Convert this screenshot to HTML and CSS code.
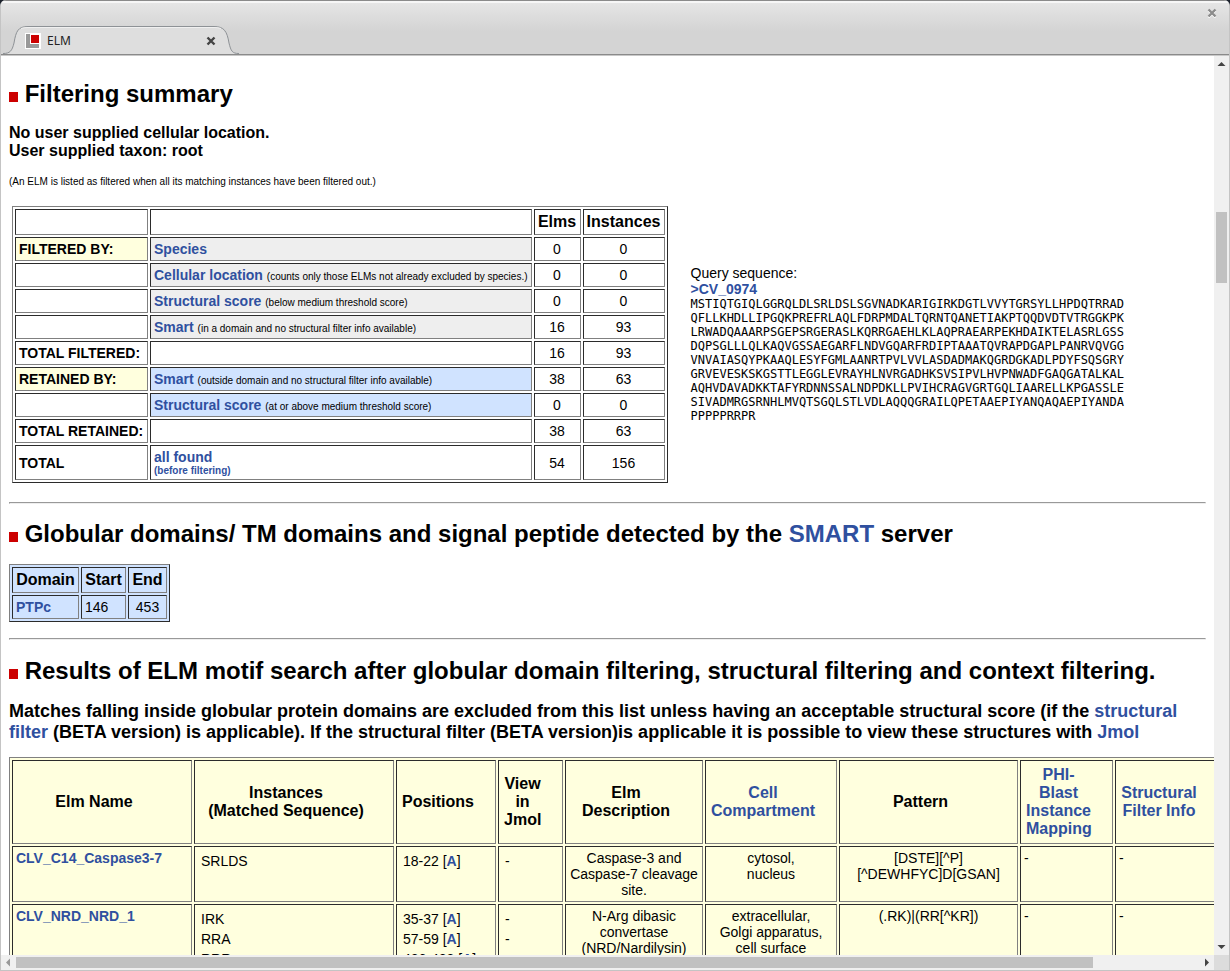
FILE: index.html
```html
<!DOCTYPE html>
<html lang="en">
<head>
<meta charset="utf-8">
<title>ELM</title>
<link rel="stylesheet" href="styles.css">
</head>
<body>
<div class="window">
  <header class="chrome">
    <button class="window-close" type="button" aria-label="Close window">
      <svg width="10" height="10" viewBox="0 0 10 10"><path d="M1.500 2.500L8.500 9.500M8.500 2.500L1.500 9.500" stroke="#fff" stroke-width="2.200"/><path d="M1.500 1.500L8.500 8.500M8.500 1.500L1.500 8.500" stroke="#8c8c8c" stroke-width="2.400"/></svg>
    </button>
    <div class="tab">
      <svg class="tab-shape" width="238" height="28" viewBox="0 0 238 28"><path d="M2 28C9 27.500 11 24 13 17C15 6 17 1.500 27 1.500H213C223 1.500 226 6 228 17C230 24 231 27.500 238 28Z" fill="#dedede"/><path d="M2 27.500C9 27.500 11 25 13 17C15 5 17 .5 27 .5H213C223 .5 226 5 228 17C230 25 231 27.500 238 27.500" fill="none" stroke="#8e9296"/><path d="M20 2.500Q23 1.500 27 1.500H213Q217 1.500 220 2.500" fill="none" stroke="#f0f0f0"/></svg>
      <svg class="favicon" width="16" height="16" viewBox="0 0 16 16"><path fill="#fff" d="M0 0h16v16H0z"/><path fill="#999" d="M1 1h4v10h9v4H1z"/><path fill="#c00" d="M6 2h8v8H6z"/></svg>
      <span class="tab-title">ELM</span>
      <button class="tab-close" type="button" aria-label="Close tab">
        <svg width="10" height="10" viewBox="0 0 10 10"><path d="M1.500 1.500L8.500 8.500M8.500 1.500L1.500 8.500" stroke="#444" stroke-width="2.400"/></svg>
      </button>
    </div>
  </header>
  <main class="page">
    <h2><span class="bullet"></span> Filtering summary</h2>
    <h3>No user supplied cellular location.<br>User supplied taxon: root</h3>
    <p class="note">(An ELM is listed as filtered when all its matching instances have been filtered out.)</p>
    <div class="summary">
      <table class="grid">
        <colgroup><col class="w-label"><col class="w-filter"><col class="w-elms"><col class="w-count"></colgroup>
        <thead><tr><th></th><th></th><th>Elms</th><th>Instances</th></tr></thead>
        <tbody>
          <tr><td class="label cream">FILTERED BY:</td><td class="gray"><a href="#">Species</a></td><td class="num">0</td><td class="num">0</td></tr>
          <tr><td></td><td class="gray"><a href="#">Cellular location</a> <small>(counts only those ELMs not already excluded by species.)</small></td><td class="num">0</td><td class="num">0</td></tr>
          <tr><td></td><td class="gray"><a href="#">Structural score</a> <small>(below medium threshold score)</small></td><td class="num">0</td><td class="num">0</td></tr>
          <tr><td></td><td class="gray"><a href="#">Smart</a> <small>(in a domain and no structural filter info available)</small></td><td class="num">16</td><td class="num">93</td></tr>
          <tr><td class="label">TOTAL FILTERED:</td><td></td><td class="num">16</td><td class="num">93</td></tr>
          <tr><td class="label cream">RETAINED BY:</td><td class="blue"><a href="#">Smart</a> <small>(outside domain and no structural filter info available)</small></td><td class="num">38</td><td class="num">63</td></tr>
          <tr><td></td><td class="blue"><a href="#">Structural score</a> <small>(at or above medium threshold score)</small></td><td class="num">0</td><td class="num">0</td></tr>
          <tr><td class="label">TOTAL RETAINED:</td><td></td><td class="num">38</td><td class="num">63</td></tr>
          <tr><td class="label">TOTAL</td><td><a class="stacked" href="#">all found <small>(before filtering)</small></a></td><td class="num">54</td><td class="num">156</td></tr>
        </tbody>
      </table>
      <div class="query">
        <div>Query sequence:</div>
        <a href="#">&gt;CV_0974</a>
<pre>MSTIQTGIQLGGRQLDLSRLDSLSGVNADKARIGIRKDGTLVVYTGRSYLLHPDQTRRAD
QFLLKHDLLIPGQKPREFRLAQLFDRPMDALTQRNTQANETIAKPTQQDVDTVTRGGKPK
LRWADQAAARPSGEPSRGERASLKQRRGAEHLKLAQPRAEARPEKHDAIKTELASRLGSS
DQPSGLLLQLKAQVGSSAEGARFLNDVGQARFRDIPTAAATQVRAPDGAPLPANRVQVGG
VNVAIASQYPKAAQLESYFGMLAANRTPVLVVLASDADMAKQGRDGKADLPDYFSQSGRY
GRVEVESKSKGSTTLEGGLEVRAYHLNVRGADHKSVSIPVLHVPNWADFGAQGATALKAL
AQHVDAVADKKTAFYRDNNSSALNDPDKLLPVIHCRAGVGRTGQLIAARELLKPGASSLE
SIVADMRGSRNHLMVQTSGQLSTLVDLAQQQGRAILQPETAAEPIYANQAQAEPIYANDA
PPPPPRRPR</pre>
      </div>
    </div>
    <hr>
    <h2><span class="bullet"></span> Globular domains/ TM domains and signal peptide detected by the <a href="#">SMART</a> server</h2>
    <table class="grid domains blue">
      <colgroup><col class="w-domain"><col class="w-start"><col class="w-end"></colgroup>
      <thead><tr><th>Domain</th><th>Start</th><th>End</th></tr></thead>
      <tbody><tr><td><a href="#">PTPc</a></td><td>146</td><td class="num">453</td></tr></tbody>
    </table>
    <hr>
    <h2><span class="bullet"></span> Results of ELM motif search after globular domain filtering, structural filtering and context filtering.</h2>
    <h3 class="lead">Matches falling inside globular protein domains are excluded from this list unless having an acceptable structural score (if the <a href="#">structural filter</a> (BETA version) is applicable). If the structural filter (BETA version)is applicable it is possible to view these structures with <a href="#">Jmol</a></h3>
    <table class="grid results cream">
      <colgroup><col class="w-name"><col class="w-inst"><col class="w-pos"><col class="w-view"><col class="w-desc"><col class="w-cell"><col class="w-pat"><col class="w-map"><col class="w-info"></colgroup>
      <thead><tr><th>Elm Name</th><th>Instances<br>(Matched Sequence)</th><th>Positions</th><th>View<br>in<br>Jmol</th><th>Elm<br>Description</th><th><a href="#">Cell<br>Compartment</a></th><th>Pattern</th><th><a href="#">PHI-<br>Blast<br>Instance<br>Mapping</a></th><th><a href="#">Structural<br>Filter Info</a></th></tr></thead>
      <tbody>
        <tr><td><a href="#">CLV_C14_Caspase3-7</a></td><td class="list">SRLDS</td><td class="list">18-22 [<a href="#">A</a>]</td><td class="list">-</td><td class="num">Caspase-3 and Caspase-7 cleavage site.</td><td class="num">cytosol,<br>nucleus</td><td class="num">[DSTE][^P]<br>[^DEWHFYC]D[GSAN]</td><td>-</td><td>-</td></tr>
        <tr><td><a href="#">CLV_NRD_NRD_1</a></td><td class="list">IRK<br>RRA<br>RRR</td><td class="list">35-37 [<a href="#">A</a>]<br>57-59 [<a href="#">A</a>]<br>426-428 [<a href="#">A</a>]</td><td class="list">-<br>-</td><td class="num">N-Arg dibasic convertase (NRD/Nardilysin)</td><td class="num">extracellular,<br>Golgi apparatus,<br>cell surface</td><td class="num">(.RK)|(RR[^KR])</td><td>-</td><td>-</td></tr>
      </tbody>
    </table>
  </main>
  <div class="vbar">
    <svg width="15" height="16" viewBox="0 0 15 16"><path fill="#444" d="M3.500 10L7.500 6L11.500 10Z"/></svg>
    <div class="vtrack"><div class="vthumb"></div></div>
    <svg width="15" height="16" viewBox="0 0 15 16"><path fill="#444" d="M3.500 6L7.500 10L11.500 6Z"/></svg>
  </div>
  <div class="hbar">
    <svg width="15" height="15" viewBox="0 0 15 15"><path fill="#999" d="M9 3.500L5 7.500L9 11.500Z"/></svg>
    <div class="htrack"><div class="hthumb"></div></div>
    <svg width="15" height="15" viewBox="0 0 15 15"><path fill="#444" d="M6 3.500L10 7.500L6 11.500Z"/></svg>
  </div>
  <div class="corner"></div>
</div>
</body>
</html>
```
FILE: styles.css
```css
* { box-sizing: border-box; }
body {
  margin: 0;
  background: #1c222c;
  color: #000;
  font: 14px/16px "Liberation Sans", Arial, sans-serif;
}
button { border: 0; padding: 0; background: none; line-height: 0; }
svg { display: block; }
.window {
  display: grid;
  grid-template: 56px 1fr 15px / 1fr 15px;
  height: 100vh;
  background: #fff;
  border: 1px solid #c4c4c4;
  border-top: 0;
  border-radius: 6px 6px 0 0;
  overflow: hidden;
}
.chrome {
  grid-column: 1 / -1;
  position: relative;
  display: flex;
  align-items: flex-end;
  background: linear-gradient(#e6e6e6, #d4d4d4 30px);
  border-top: 1px solid #8a8a8a;
  border-bottom: 1px solid #c8c8c8;
  box-shadow: inset 0 2px #f6f6f6, inset 0 -1px #8a8a8a;
}
.window-close { position: absolute; top: 7px; right: 12px; }
.tab {
  position: relative;
  display: flex;
  align-items: center;
  width: 238px;
  height: 29px;
  padding: 0 23px 0 24px;
  gap: 6px;
}
.tab-shape { position: absolute; left: 0; top: 0; }
.favicon, .tab-title, .tab-close { position: relative; }
.tab-title { flex: 1; color: #222; font: 12px/16px "Noto Sans", sans-serif; }

.page { min-width: 0; padding: 24px 8px 0; overflow: hidden; }
.page > * { margin: 0; }
a { color: #2f509f; font-weight: bold; text-decoration: none; }
h2 { font-size: 24px; line-height: 27px; }
h3 { font-size: 16px; line-height: 18px; }
.page > h3 { margin-top: 17px; }
.page > .lead { font-size: 18px; line-height: 21px; }
.page > .note { margin-top: 16px; font-size: 10px; line-height: 12px; }
.bullet { display: inline-block; width: 9px; height: 10px; background: #c00; }
hr { border: 1px solid; border-color: #999 #eee #eee #999; }
.page > hr { margin: 16px 0; }
small { font-size: 10px; line-height: 11px; }

.grid {
  border: 1px solid;
  border-color: #808080 #2b2b2b #2b2b2b #808080;
  border-spacing: 2px;
}
.grid th, .grid td {
  padding: 3px;
  border: 1px solid;
  border-color: #2b2b2b #808080 #808080 #2b2b2b;
}
.grid th { font-size: 16px; line-height: 18px; }
.grid .num { text-align: center; }
.grid .label { font-weight: bold; }
.gray { background: #eee; }
.blue { background: #d0e3ff; }
.cream { background: #ffffde; }
.stacked small { display: block; }

.summary { display: flex; align-items: center; gap: 23px; white-space: nowrap; }
.page > .summary { margin: 18px 3px 0; }
.page > .summary + hr { margin-top: 19px; }
.query { padding-bottom: 2px; }
pre { margin: 0; font: 12px/14px "DejaVu Sans Mono", monospace; }
.w-label { width: 133px; }
.w-filter { width: 381px; }
.w-elms { width: 47px; }
.w-count { width: 82px; }

.page > .domains { margin-top: 17px; }
.page > .domains + hr { margin-bottom: 17px; }
.w-domain { width: 67px; }
.w-start { width: 45px; }
.w-end { width: 39px; }

.page > .results { margin-top: 14px; }
.results { table-layout: fixed; width: 1213px; }
.results tr > * { vertical-align: top; }
.results tr > th { padding: 5px 21px 5px 5px; vertical-align: middle; white-space: nowrap; }
.results .list { padding: 4px 6px; line-height: 20px; }
.w-name { width: 180px; }
.w-inst { width: 200px; }
.w-pos { width: 100px; }
.w-view { width: 65px; }
.w-desc { width: 138px; }
.w-cell { width: 132px; }
.w-pat { width: 179px; }
.w-map { width: 93px; }

.vbar, .hbar { display: flex; background: #f0f0f0; }
.vbar { flex-direction: column; }
.vtrack, .htrack { flex: 1; }
.vtrack { padding: 0 2px; }
.htrack { padding: 2px 0; }
.vthumb { height: 71px; margin-top: 140px; background: #c1c1c1; }
.hthumb { width: 91%; height: 11px; background: #c1c1c1; }
.corner { background: #dcdcdc; }
```
